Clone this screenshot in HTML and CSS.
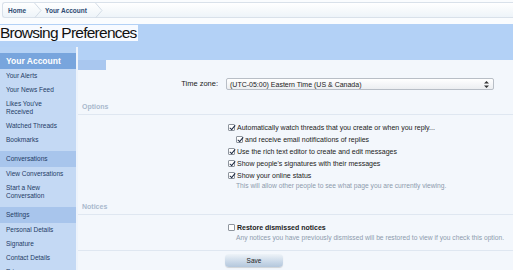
FILE: index.html
```html
<!DOCTYPE html>
<html lang="en">
<head>
  <meta charset="UTF-8" />
  <title>Browsing Preferences</title>
  <link rel="stylesheet" href="styles.css">
</head>
<body>

  <div class="crumbs">
    <span class="crumb first">Home</span>
    <svg class="chev" width="8" height="15" viewBox="0 0 8 15"><path d="M0.5 0 L7 7.5 L0.5 15" fill="none" stroke="#d3dce6" stroke-width="1"/></svg>
    <span class="crumb">Your Account</span>
    <svg class="chev" width="8" height="15" viewBox="0 0 8 15"><path d="M0.5 0 L7 7.5 L0.5 15" fill="none" stroke="#d3dce6" stroke-width="1"/></svg>
  </div>

  <div class="titlebar">
    <h1>Browsing Preferences</h1>
  </div>

  <div class="layout">
    <nav class="side">
      <div class="side-head">Your Account</div>
      <ul class="side-list">
        <li>Your Alerts</li>
        <li>Your News Feed</li>
        <li>Likes You've<br>Received</li>
        <li>Watched Threads</li>
        <li>Bookmarks</li>
      </ul>
      <div class="side-sec">Conversations</div>
      <ul class="side-list">
        <li>View Conversations</li>
        <li>Start a New<br>Conversation</li>
      </ul>
      <div class="side-sec">Settings</div>
      <ul class="side-list">
        <li>Personal Details</li>
        <li>Signature</li>
        <li>Contact Details</li>
        <li>Privacy</li>
      </ul>
    </nav>

    <main class="main">
      <div class="band"></div>
      <div class="tab"></div>

      <div class="row tz-row">
        <label class="row-label">Time zone:</label>
        <div class="select">
          <span>(UTC-05:00) Eastern Time (US &amp; Canada)</span>
          <svg width="5" height="7" viewBox="0 0 5 7"><path d="M2.5 0 L5 2.6 L0 2.6 Z M2.5 7 L5 4.4 L0 4.4 Z" fill="#333"/></svg>
        </div>
      </div>

      <h3 class="sec">Options</h3>
      <div class="row">
        <span></span>
        <ul class="checks">
          <li><span class="box on"></span>Automatically watch threads that you create or when you reply...</li>
          <li class="sub"><span class="box on"></span>and receive email notifications of replies</li>
          <li><span class="box on"></span>Use the rich text editor to create and edit messages</li>
          <li><span class="box on"></span>Show people's signatures with their messages</li>
          <li><span class="box on"></span>Show your online status</li>
          <li class="hint">This will allow other people to see what page you are currently viewing.</li>
        </ul>
      </div>

      <h3 class="sec notices">Notices</h3>
      <div class="row">
        <span></span>
        <ul class="checks">
          <li class="strong"><span class="box"></span>Restore dismissed notices</li>
          <li class="hint">Any notices you have previously dismissed will be restored to view if you check this option.</li>
        </ul>
      </div>

      <div class="submit row">
        <span></span>
        <div><button class="save">Save</button></div>
      </div>
    </main>
  </div>

</body>
</html>
```

FILE: styles.css
```css
* {
  box-sizing: border-box;
}
body {
  margin: 0;
  background: #fafcfe;
  font-family: "Liberation Sans", Arial, sans-serif;
  color: #1e2b3a;
  overflow: hidden;
}
ul {
  list-style: none;
  margin: 0;
  padding: 0;
}

/* breadcrumb */
.crumbs {
  display: flex;
  align-items: center;
  height: 16px;
  margin: 2px 0 0 2px;
  padding-left: 5px;
  background: linear-gradient(#ffffff, #eef4f9);
  border: 1px solid #d9e1ea;
  border-right: none;
  border-radius: 3px 0 0 3px;
  font-size: 6.5px;
  font-weight: bold;
  color: #2d4b73;
}
.crumb {
  padding-right: 8px;
}
.chev {
  margin-right: 3px;
}

/* title */
.titlebar {
  margin-top: 6px;
  height: 23px;
  background: #b3d1f6;
}
h1 {
  display: inline-block;
  margin: 0;
  height: 16px;
  line-height: 16px;
  padding-right: 1px;
  font-size: 15.5px;
  font-weight: normal;
  letter-spacing: -0.75px;
  color: #111;
  background: #f7faff;
}

/* sidebar */
.layout {
  display: flex;
}
.side {
  width: 76px;
  flex: none;
  padding-top: 6px;
  background: linear-gradient(#b5d2f5 0, #b5d2f5 6px, #c4d9f4 6px);
  font-size: 6.5px;
  color: #1f3c66;
}
.side-head {
  height: 16px;
  line-height: 16px;
  padding-left: 6px;
  background: #78a5dd;
  color: #fff;
  font-size: 8.5px;
  font-weight: bold;
}
.side-list {
  padding-bottom: 4px;
}
.side-list li {
  padding: 3px 6px;
  line-height: 8px;
}
.side-sec {
  height: 16px;
  line-height: 16px;
  padding-left: 6px;
  background: #a8c5ec;
}

/* main */
.main {
  flex: 1;
  min-height: 230px;
  border-left: 2px solid #edf3fb;
  background: #f3f7fc;
  font-size: 7px;
}
.band {
  height: 13px;
  background: #b3d1f6;
}
.tab {
  width: 28px;
  height: 10px;
  background: #a9c7ef;
}
.row {
  display: grid;
  grid-template-columns: 140px 1fr;
  column-gap: 8px;
}
.row-label {
  text-align: right;
  line-height: 12px;
  font-size: 7.5px;
  color: #222;
}
.tz-row {
  margin-top: 8px;
  padding-right: 19px;
}
.select {
  display: flex;
  align-items: center;
  justify-content: space-between;
  height: 12px;
  padding: 0 4px 0 3px;
  border: 1px solid #b8bec6;
  border-radius: 2px;
  background: linear-gradient(#ffffff, #eceef1);
  color: #222;
}
.sec {
  margin: 12px 0 0;
  padding: 0 0 2px 4px;
  line-height: 10px;
  font-size: 7px;
  font-weight: bold;
  color: #a9b9cd;
  border-bottom: 1px solid #dfe7f1;
}
.sec.notices {
  margin-top: 13px;
}
.checks {
  margin-top: 6px;
  margin-left: 2px;
}
.checks li {
  display: flex;
  align-items: center;
  height: 12px;
  color: #222;
}
.checks li.sub {
  padding-left: 8px;
}
.checks li.strong {
  font-weight: bold;
}
.checks li.hint {
  height: 8px;
  padding-left: 8px;
  font-size: 6.7px;
  color: #8d9bad;
}
.box {
  width: 7px;
  height: 7px;
  margin-right: 2px;
  flex: none;
  border: 1px solid #8e959e;
  border-radius: 1px;
  background: #fff;
  position: relative;
}
.box.on::after {
  content: "";
  position: absolute;
  left: 1.5px;
  top: -1px;
  width: 2px;
  height: 5px;
  border: solid #1d2b44;
  border-width: 0 1.3px 1.3px 0;
  transform: rotate(40deg);
}
.submit {
  margin-top: 9px;
  padding-top: 3px;
  border-top: 1px solid #dfe7f1;
}
.save {
  width: 58px;
  height: 13px;
  margin-left: -1px;
  padding: 0;
  border: none;
  border-radius: 4px;
  background: linear-gradient(#eef3f8, #c9d8e8 60%, #b4c7dc);
  box-shadow: 0 1px 1px rgba(0, 0, 0, 0.15);
  font-family: inherit;
  font-size: 6.5px;
  color: #222;
}
```
